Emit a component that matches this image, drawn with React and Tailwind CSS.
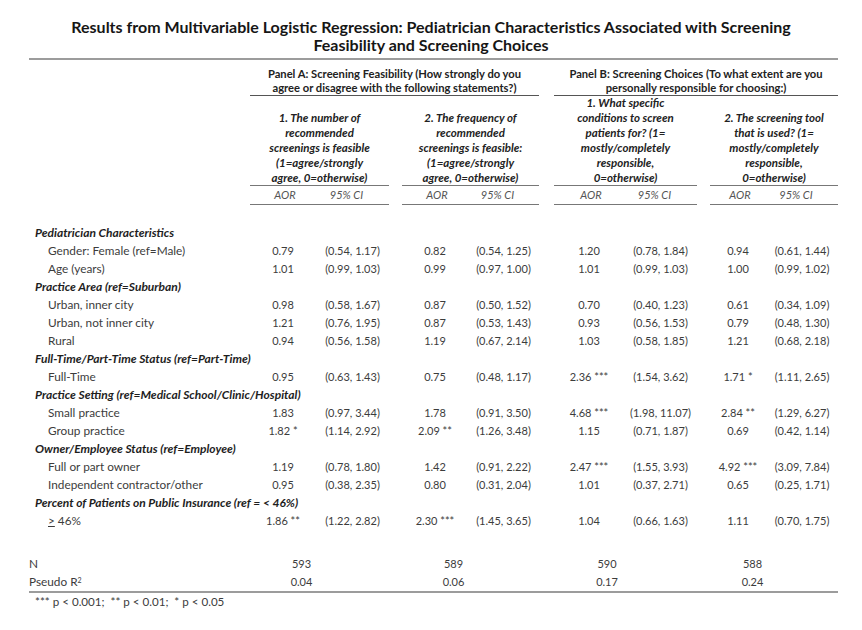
const groups = [
  { a: 'w-[66px]', c: 'w-[73px]', gap: 'w-[13px]', n: 'pl-[37px]' },
  { a: 'w-[66px]', c: 'w-[71px]', gap: 'w-[15px]', n: 'pl-[37px]' },
  { a: 'w-[70px]', c: 'w-[73px]', gap: 'w-[13px]', n: 'pl-[36px]' },
  { a: 'w-[56px]', c: 'w-[72px]', gap: null, n: 'pl-[29px]' },
];

const groupWidths = ['w-[139px]', 'w-[137px]', 'w-[143px]', 'w-[128px]'];

const questions = [
  ['1. The number of', 'recommended', 'screenings is feasible', '(1=agree/strongly', 'agree, 0=otherwise)'],
  ['2. The frequency of', 'recommended', 'screenings is feasible:', '(1=agree/strongly', 'agree, 0=otherwise)'],
  ['1. What specific', 'conditions to screen', 'patients for? (1=', 'mostly/completely', 'responsible,', '0=otherwise)'],
  ['2. The screening tool', 'that is used? (1=', 'mostly/completely', 'responsible,', '0=otherwise)'],
];

const rows = [
  { cat: 'Pediatrician Characteristics' },
  { label: 'Gender: Female (ref=Male)', v: [['0.79', '(0.54, 1.17)'], ['0.82', '(0.54, 1.25)'], ['1.20', '(0.78, 1.84)'], ['0.94', '(0.61, 1.44)']] },
  { label: 'Age (years)', v: [['1.01', '(0.99, 1.03)'], ['0.99', '(0.97, 1.00)'], ['1.01', '(0.99, 1.03)'], ['1.00', '(0.99, 1.02)']] },
  { cat: 'Practice Area (ref=Suburban)' },
  { label: 'Urban, inner city', v: [['0.98', '(0.58, 1.67)'], ['0.87', '(0.50, 1.52)'], ['0.70', '(0.40, 1.23)'], ['0.61', '(0.34, 1.09)']] },
  { label: 'Urban, not inner city', v: [['1.21', '(0.76, 1.95)'], ['0.87', '(0.53, 1.43)'], ['0.93', '(0.56, 1.53)'], ['0.79', '(0.48, 1.30)']] },
  { label: 'Rural', v: [['0.94', '(0.56, 1.58)'], ['1.19', '(0.67, 2.14)'], ['1.03', '(0.58, 1.85)'], ['1.21', '(0.68, 2.18)']] },
  { cat: 'Full-Time/Part-Time Status (ref=Part-Time)' },
  { label: 'Full-Time', v: [['0.95', '(0.63, 1.43)'], ['0.75', '(0.48, 1.17)'], ['2.36 ***', '(1.54, 3.62)'], ['1.71 *', '(1.11, 2.65)']] },
  { cat: 'Practice Setting (ref=Medical School/Clinic/Hospital)' },
  { label: 'Small practice', v: [['1.83', '(0.97, 3.44)'], ['1.78', '(0.91, 3.50)'], ['4.68 ***', '(1.98, 11.07)'], ['2.84 **', '(1.29, 6.27)']] },
  { label: 'Group practice', v: [['1.82 *', '(1.14, 2.92)'], ['2.09 **', '(1.26, 3.48)'], ['1.15', '(0.71, 1.87)'], ['0.69', '(0.42, 1.14)']] },
  { cat: 'Owner/Employee Status (ref=Employee)' },
  { label: 'Full or part owner', v: [['1.19', '(0.78, 1.80)'], ['1.42', '(0.91, 2.22)'], ['2.47 ***', '(1.55, 3.93)'], ['4.92 ***', '(3.09, 7.84)']] },
  { label: 'Independent contractor/other', v: [['0.95', '(0.38, 2.35)'], ['0.80', '(0.31, 2.04)'], ['1.01', '(0.37, 2.71)'], ['0.65', '(0.25, 1.71)']] },
  { cat: 'Percent of Patients on Public Insurance (ref = < 46%)' },
  { label: <><span className="underline">&gt;</span> 46%</>, v: [['1.86 **', '(1.22, 2.82)'], ['2.30 ***', '(1.45, 3.65)'], ['1.04', '(0.66, 1.63)'], ['1.11', '(0.70, 1.75)']] },
];

function DataRow({ row }) {
  if (row.cat) {
    return (
      <div className="flex h-[18px] items-center">
        <div className="pl-[6px] text-[12px] font-bold italic text-[#1e1e1e] whitespace-nowrap">{row.cat}</div>
      </div>
    );
  }
  return (
    <div className="flex h-[18px] items-center">
      <div className="w-[221px] pl-[19px] text-[11.8px] whitespace-nowrap">{row.label}</div>
      {groups.map((g, i) => (
        <div key={i} className="flex">
          <div className={`${g.a} text-center whitespace-nowrap`}>{row.v[i][0]}</div>
          <div className={`${g.c} text-center whitespace-nowrap`}>{row.v[i][1]}</div>
          {g.gap && <div className={g.gap} />}
        </div>
      ))}
    </div>
  );
}

function StatRow({ label, values }) {
  return (
    <div className="flex h-[18px] items-center">
      <div className="w-[221px] text-[11.8px] whitespace-nowrap">{label}</div>
      {groups.map((g, i) => (
        <div key={i} className="flex">
          <div className={`${g.a} ${g.n} text-center whitespace-nowrap`}>{values[i]}</div>
          <div className={g.c} />
          {g.gap && <div className={g.gap} />}
        </div>
      ))}
    </div>
  );
}

export default function App() {
  return (
    <div className="w-[862px] h-[630px] bg-white font-['Lato',sans-serif] text-[11px] text-[#3c3c3c]">
      {/* Title */}
      <div className="pt-[18px] text-center text-[16px] leading-[18px] font-bold text-[#161616]">
        Results from Multivariable Logistic Regression: Pediatrician Characteristics Associated with Screening
        <br />
        Feasibility and Screening Choices
      </div>

      <div className="ml-[29px] w-[809px] mt-[4px] border-t-2 border-[#9c9c9c]">
        {/* Panel headers */}
        <div className="flex mt-[7px] text-[11.2px] leading-[14px] font-bold text-[#222]">
          <div className="w-[221px]" />
          <div className="w-[289px] text-center border-b border-[#555] whitespace-nowrap">
            Panel A: Screening Feasibility (How strongly do you
            <br />
            agree or disagree with the following statements?)
          </div>
          <div className="w-[15px]" />
          <div className="w-[284px] text-center border-b border-[#555] whitespace-nowrap">
            Panel B: Screening Choices (To what extent are you
            <br />
            personally responsible for choosing:)
          </div>
        </div>

        {/* Question headers */}
        <div className="flex text-[11.5px] leading-[15px] font-bold italic text-[#222]">
          <div className="w-[221px]" />
          {groups.map((g, i) => (
            <div key={i} className="flex">
              <div className={`${groupWidths[i]} h-[90px] flex flex-col justify-end items-center border-b border-[#777] whitespace-nowrap`}>
                {questions[i].map((l, j) => (
                  <div key={j}>{l}</div>
                ))}
              </div>
              {g.gap && <div className={g.gap} />}
            </div>
          ))}
        </div>

        {/* AOR / CI header */}
        <div className="flex italic text-[#555]">
          <div className="w-[221px]" />
          {groups.map((g, i) => (
            <div key={i} className="flex">
              <div className={`${groupWidths[i]} flex h-[19px] items-center border-b border-[#777]`}>
                <div className={`${g.a} text-center pl-[4px]`}>AOR</div>
                <div className={`${g.c} text-center pr-[12px]`}>95% CI</div>
              </div>
              {g.gap && <div className={g.gap} />}
            </div>
          ))}
        </div>

        {/* Body */}
        <div className="mt-[19px]">
          {rows.map((r, i) => (
            <DataRow key={i} row={r} />
          ))}
        </div>

        <div className="mt-[25px] border-b-2 border-[#9c9c9c]">
          <StatRow label="N" values={['593', '589', '590', '588']} />
          <StatRow
            label={
              <>
                Pseudo R<sup className="text-[7px]">2</sup>
              </>
            }
            values={['0.04', '0.06', '0.17', '0.24']}
          />
        </div>

        <div className="h-[18px] flex items-center pl-[6px] text-[11.6px]">
          *** p &lt; 0.001;&nbsp; ** p &lt; 0.01;&nbsp; * p &lt; 0.05
        </div>
      </div>
    </div>
  );
}
